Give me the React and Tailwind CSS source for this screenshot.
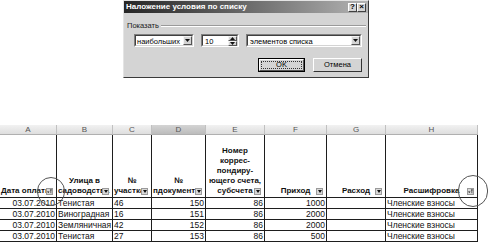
import React from "react";

const cols = [57, 56, 39, 54, 59, 62, 59, 92];
const letters = ["A", "B", "C", "D", "E", "F", "G", "H"];

function Arrow() {
  return (
    <svg width="5" height="3" viewBox="0 0 5 3" className="block">
      <path d="M0 0H5L2.5 3Z" fill="#111" />
    </svg>
  );
}

function DropBtn() {
  return (
    <div className="w-[9px] h-full bg-[#d4d4d4] border border-t-[#f4f4f4] border-l-[#f4f4f4] border-r-[#555] border-b-[#555] flex items-center justify-center">
      <Arrow />
    </div>
  );
}

function Sunken({ className = "", children }) {
  return (
    <div className={"border border-t-[#808080] border-l-[#808080] border-r-white border-b-white " + className}>
      <div className="h-full border border-t-[#404040] border-l-[#404040] border-r-[#d4d4d4] border-b-[#d4d4d4] bg-white flex items-stretch">
        {children}
      </div>
    </div>
  );
}

function TitleBtn({ children }) {
  return (
    <div className="w-[9px] h-[9px] bg-[#d4d4d4] border border-t-white border-l-white border-r-[#404040] border-b-[#404040] flex items-center justify-center text-[8px] font-bold leading-none text-black">
      {children}
    </div>
  );
}

function Dialog() {
  return (
    <div className="ml-[123px] w-[246px] h-[78px] bg-[#d4d4d4] border border-t-[#e4e4e4] border-l-[#e4e4e4] border-r-[#3a3a3a] border-b-[#3a3a3a] flex flex-col">
      <div className="h-[12px] flex items-center justify-between bg-gradient-to-r from-[#262626] via-[#6a6a6a] to-[#b4b4b4] pl-[2px] pr-[2px]">
        <span className="text-white font-bold text-[8px] leading-none">Наложение условия по списку</span>
        <div className="flex">
          <TitleBtn>?</TitleBtn>
          <TitleBtn>×</TitleBtn>
        </div>
      </div>
      <div className="flex items-center mt-[8px] pl-[3px] pr-[2px] gap-[2px] h-[9px]">
        <span className="text-[7.5px] leading-none text-[#1a1a1a]">Показать</span>
        <div className="flex-1 h-[2px] border-t border-b border-t-[#9a9a9a] border-b-white" />
      </div>
      <div className="flex mt-[4px] ml-[10px] gap-[7px] h-[13px]">
        <Sunken className="w-[60px]">
          <span className="flex-1 text-[7.5px] leading-[11px] pl-[1px] text-black">наибольших</span>
          <DropBtn />
        </Sunken>
        <Sunken className="w-[38px]">
          <span className="flex-1 text-[7.5px] leading-[11px] pl-[2px] text-black">10</span>
          <div className="w-[9px] flex flex-col">
            <div className="flex-1 bg-[#d4d4d4] border border-t-[#f4f4f4] border-l-[#f4f4f4] border-r-[#555] border-b-[#555] flex items-center justify-center">
              <svg width="5" height="3" viewBox="0 0 5 3" className="block"><path d="M0 3H5L2.5 0Z" fill="#111" /></svg>
            </div>
            <div className="flex-1 bg-[#d4d4d4] border border-t-[#f4f4f4] border-l-[#f4f4f4] border-r-[#555] border-b-[#555] flex items-center justify-center">
              <Arrow />
            </div>
          </div>
        </Sunken>
        <Sunken className="w-[116px]">
          <span className="flex-1 text-[7.5px] leading-[11px] pl-[2px] text-black">элементов списка</span>
          <DropBtn />
        </Sunken>
      </div>
      <div className="flex justify-end gap-[8px] mr-[6px] mt-[11px]">
        <div className="w-[47px] h-[14px] border border-black">
          <div className="h-full border border-t-white border-l-white border-r-[#555] border-b-[#555] p-[1px]">
            <div className="h-full border border-dotted border-[#333] flex items-center justify-center text-[7.5px] leading-none text-black">OK</div>
          </div>
        </div>
        <div className="w-[49px] h-[14px] border border-t-white border-l-white border-r-[#333] border-b-[#333] flex items-center justify-center text-[7.5px] leading-none text-black">
          Отмена
        </div>
      </div>
    </div>
  );
}

function FilterBtn({ active }) {
  return (
    <div className="absolute right-[3px] bottom-[2px] w-[7px] h-[7px] bg-[#d8d8d8] border border-[#9a9a9a] flex items-center justify-center">
      {active ? (
        <svg width="5" height="5" viewBox="0 0 5 5" className="block">
          <path d="M0 2.5H2.5L1.25 4Z" fill="#111" />
          <path d="M2.8 0.5H5L4.2 1.8V4.5L3.6 4V1.8Z" fill="#111" />
        </svg>
      ) : (
        <svg width="4" height="3" viewBox="0 0 4 3" className="block"><path d="M0 0H4L2 3Z" fill="#111" /></svg>
      )}
    </div>
  );
}

const headers = [
  { lines: ["Дата оплаты"], align: "left", active: true },
  { lines: ["Улица в", "садоводства"], align: "center", last: "left" },
  { lines: ["№", "участка"], align: "center", last: "left" },
  { lines: ["№", "пдокумента"], align: "center", last: "left" },
  { lines: ["Номер", "коррес-", "пондиру-", "ющего счета,", "субсчета"], align: "center" },
  { lines: ["Приход"], align: "center" },
  { lines: ["Расход"], align: "center" },
  { lines: ["Расшифровка"], align: "center", active: true },
];

const rows = [
  ["03.07.2010", "Тенистая", "46", "150", "86", "1000", "", "Членские взносы"],
  ["03.07.2010", "Виноградная", "16", "151", "86", "2000", "", "Членские взносы"],
  ["03.07.2010", "Земляничная", "42", "152", "86", "2000", "", "Членские взносы"],
  ["03.07.2010", "Тенистая", "27", "153", "86", "500", "", "Членские взносы"],
];
const rightAligned = [true, false, false, true, true, true, false, false];

function Sheet() {
  return (
    <div className="mt-[47px] grid grid-cols-[57px_56px_39px_54px_59px_62px_59px_92px] w-[478px]">
      {letters.map((l, i) => (
        <div
          key={l}
          className={
            "h-[10px] border-r border-b border-r-[#c0c0c0] border-b-[#b0b0b0] flex items-center justify-center text-[8px] leading-none text-[#555] " +
            (i === 3 ? "bg-gradient-to-b from-[#d4d4d4] to-[#bcbcbc]" : "bg-gradient-to-b from-[#f2f2f2] to-[#dedede]")
          }
        >
          {l}
        </div>
      ))}
      {headers.map((h, i) => (
        <div key={i} className="relative h-[63px] border-r border-b border-[#1e1e1e] overflow-hidden">
          <div className="absolute inset-x-0 bottom-[1px] flex flex-col text-[8px] font-bold leading-[10px] text-[#111]">
            {h.lines.map((ln, j) => {
              const isLast = j === h.lines.length - 1;
              const al = isLast && h.last ? h.last : h.align;
              return (
                <div
                  key={j}
                  className={
                    "whitespace-nowrap flex " +
                    (al === "left" ? "justify-start pl-[1px]" : "justify-center")
                  }
                >
                  {ln}
                </div>
              );
            })}
          </div>
          <FilterBtn active={h.active} />
        </div>
      ))}
      {rows.map((r, ri) =>
        r.map((c, ci) => (
          <div
            key={ri + "-" + ci}
            className={
              "h-[11px] border-r border-b border-[#1e1e1e] overflow-hidden whitespace-nowrap text-[8.5px] leading-[10px] text-[#111] px-[1px] " +
              (rightAligned[ci] ? "text-right" : "text-left")
            }
          >
            {c}
          </div>
        ))
      )}
    </div>
  );
}

export default function App() {
  return (
    <div className="relative w-[491px] h-[242px] bg-white overflow-hidden font-['Liberation_Sans',Arial,sans-serif]">
      <Dialog />
      <Sheet />
      <div className="absolute left-[37px] top-[177px] w-[28px] h-[29px] rounded-full border-[1.5px] border-[#555]" />
      <div className="absolute left-[458px] top-[175px] w-[30px] h-[32px] rounded-full border-[1.5px] border-[#555]" />
    </div>
  );
}
